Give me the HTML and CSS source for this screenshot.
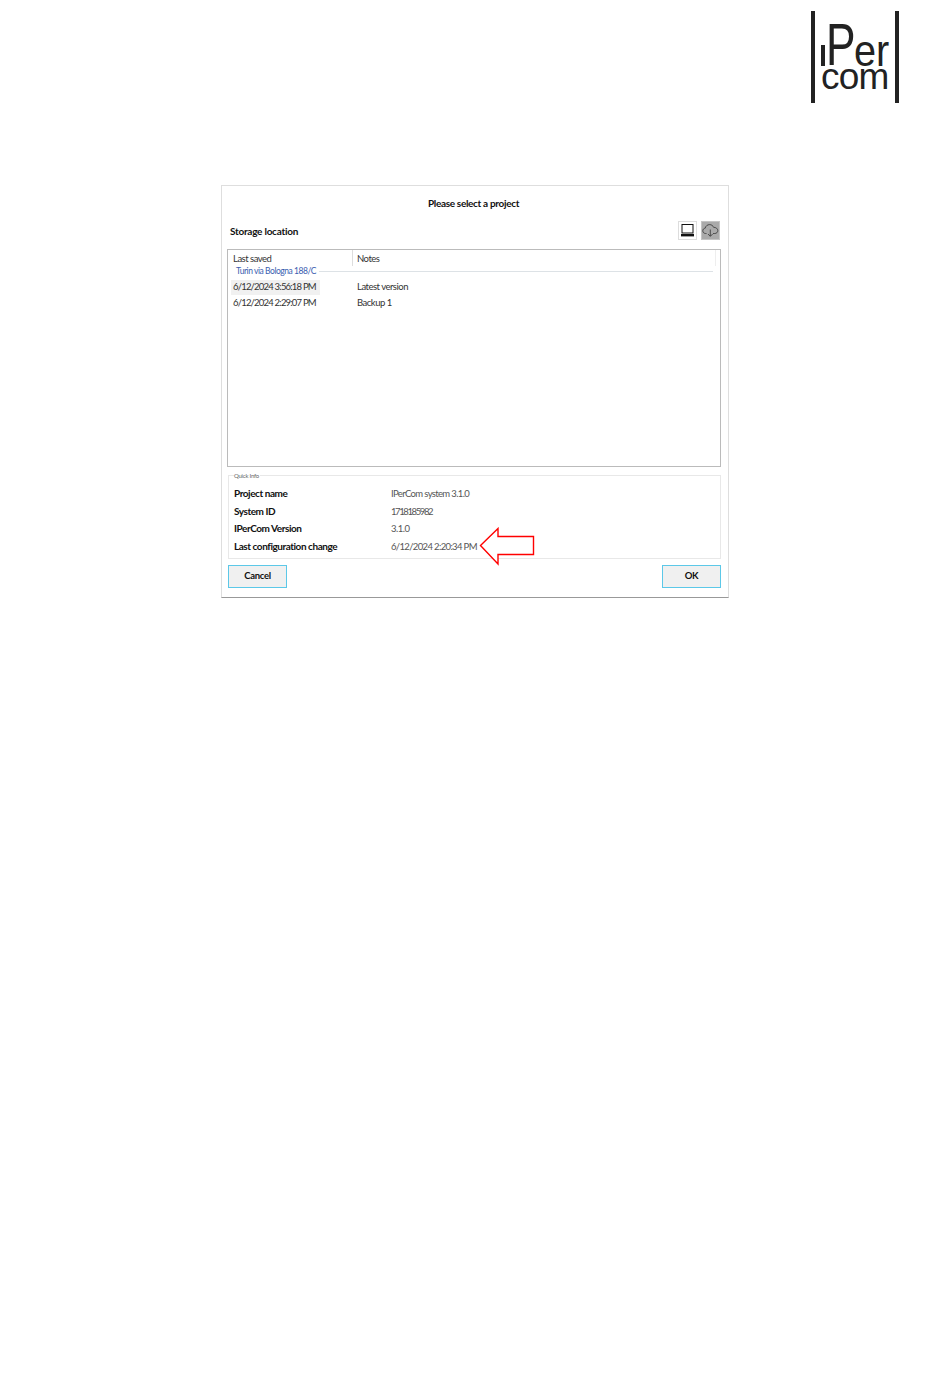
FILE: index.html
```html
<!DOCTYPE html>
<html lang="en">
<head>
<meta charset="utf-8">
<title>Please select a project</title>
<link rel="stylesheet" href="styles.css">
</head>
<body>
<header class="page-head">
  <div class="logo">
    <div class="logo-top"><span class="logo-i"></span><span class="logo-p">P</span><span class="logo-er">er</span></div>
    <div class="logo-com">com</div>
  </div>
</header>
<main class="dialog">
  <h1 class="title">Please select a project</h1>
  <div class="storage">
    <span class="storage-label">Storage location</span>
    <div class="storage-buttons">
      <button class="icon-btn">
        <svg width="15" height="15" viewBox="0 0 15 15"><rect x="2" y="1.5" width="11" height="8.5" fill="none" stroke="#111" stroke-width="1"/><rect x="1" y="11" width="13" height="2.4" fill="#111"/></svg>
      </button>
      <button class="icon-btn active">
        <svg width="17" height="15" viewBox="0 0 17 15"><path d="M4.5 10.5H3.6C1.9 10.5 .8 9.2 .8 7.8 .8 6.4 1.8 5.3 3.2 5.2 3.6 3 5.5 1.6 7.6 1.6 9.5 1.6 11 2.7 11.6 4.3 13.8 4.2 15.8 5.7 15.8 7.6 15.8 9.3 14.4 10.5 12.8 10.5H11M8.3 6.5V13M6 11 8.3 13.4 10.6 11" fill="none" stroke="#333" stroke-width=".8"/></svg>
      </button>
    </div>
  </div>
  <section class="list">
    <div class="list-head">
      <div class="col-date head-date">Last saved</div>
      <div class="col-notes head-notes">Notes</div>
    </div>
    <div class="group"><span class="group-name">Turin via Bologna 188/C</span><span class="group-line"></span></div>
    <div class="row selected"><div class="col-date"><span class="date-cell">6/12/2024 3:56:18 PM</span></div><div class="col-notes">Latest version</div></div>
    <div class="row"><div class="col-date"><span class="date-cell">6/12/2024 2:29:07 PM</span></div><div class="col-notes">Backup 1</div></div>
  </section>
  <fieldset class="info">
    <legend class="info-legend">Quick Info</legend>
    <div class="info-row"><span class="info-key">Project name</span><span class="info-val">IPerCom system 3.1.0</span></div>
    <div class="info-row"><span class="info-key">System ID</span><span class="info-val info-id">1718185982</span></div>
    <div class="info-row"><span class="info-key">IPerCom Version</span><span class="info-val info-ver">3.1.0</span></div>
    <div class="info-row"><span class="info-key">Last configuration change</span><span class="info-val info-date">6/12/2024 2:20:34 PM</span></div>
    <svg class="arrow" width="56" height="40" viewBox="0 0 56 40"><path d="M1.5 18.5 19 1.5V9.5H54.5V27.5H19V37Z" fill="#fff" stroke="#f00" stroke-width="1.4"/></svg>
  </fieldset>
  <div class="actions">
    <button class="btn">Cancel</button>
    <button class="btn">OK</button>
  </div>
</main>
</body>
</html>
```

FILE: styles.css
```css
* { box-sizing: border-box; }
html, body { margin: 0; padding: 0; background: #fff; }
body {
  width: 950px;
  height: 1397px;
  font-family: "Lato", "Roboto", sans-serif;
  font-size: 9.5px;
  letter-spacing: -.5px;
  color: #333;
  overflow: hidden;
}
.page-head {
  height: 185px;
  padding: 11px 51px 0 0;
  display: flex;
  justify-content: flex-end;
  align-items: flex-start;
}
.logo {
  width: 88px;
  height: 92px;
  border-left: 4px solid #222;
  border-right: 4px solid #222;
  font-family: "Liberation Sans", sans-serif;
  letter-spacing: 0;
  color: #222;
  padding-left: 6px;
}
.logo-top {
  display: flex;
  align-items: flex-end;
  height: 55px;
}
.logo-i {
  width: 4px;
  height: 21px;
  background: #222;
  margin-right: 1px;
}
.logo-p {
  display: block;
  width: 28px;
  font-size: 59px;
  line-height: 69px;
  height: 55px;
  transform: scaleX(.75);
  transform-origin: left bottom;
}
.logo-er {
  display: block;
  width: 34px;
  font-size: 44px;
  line-height: 79px;
  height: 55px;
  transform: scaleX(.9);
  transform-origin: left bottom;
}
.logo-com {
  font-size: 37px;
  line-height: 22px;
  letter-spacing: -.8px;
  height: 30px;
}
.dialog {
  width: 508px;
  height: 413px;
  margin-left: 221px;
  border: 1px solid #dedede;
  border-bottom-color: #999;
  padding: 0 8px 0 5px;
  position: relative;
}
.title {
  margin: 0;
  padding-top: 10px;
  height: 35px;
  text-align: center;
  font-size: 10px;
  line-height: 14px;
  font-weight: 700;
  letter-spacing: -.33px;
  color: #111;
}
.storage {
  display: flex;
  justify-content: space-between;
  align-items: center;
  height: 20px;
  padding-left: 3px;
}
.storage-label { font-weight: 700; color: #111; font-size: 10px; letter-spacing: -.25px; }
.storage-buttons { display: flex; gap: 4px; align-self: flex-start; }
.icon-btn {
  width: 19px;
  height: 19px;
  padding: 0;
  border: 1px solid #ddd;
  background: #fff;
  display: flex;
  align-items: center;
  justify-content: center;
}
.icon-btn.active { background: #aaa; border-color: #c4c4c4; }
.list {
  width: 494px;
  height: 218px;
  margin-top: 8px;
  border: 1px solid #bbb;
}
.list-head { display: flex; height: 16px; line-height: 17px; margin-right: 4px; }
.col-date { width: 125px; flex: none; }
.col-notes { flex: 1; }
.head-date { padding-left: 5px; border-right: 1px solid #ddd; }
.head-notes { padding-left: 4px; border-right: 1px solid #eee; }
.group {
  display: flex;
  align-items: center;
  height: 10px;
  padding: 0 7px 0 8px;
  margin-bottom: 4px;
  gap: 3px;
}
.group-name { color: #3a5db0; font-size: 8.5px; letter-spacing: -.45px; white-space: nowrap; }
.group-line { flex: 1; height: 1px; background: #dde2e6; }
.row { display: flex; height: 16px; line-height: 14px; }
.row .col-date { padding-left: 3px; width: 129px; }
.date-cell { display: inline-block; padding-left: 2px; padding-bottom: 1px; width: 89px; white-space: nowrap; letter-spacing: -.8px; }
.selected .date-cell { background: #f1f1f1; }
.info {
  position: relative;
  width: 493px;
  height: 87px;
  margin: 5px 0 0 1px;
  padding: 6px 5px 0;
  border: 1px solid #e8e8e8;
  min-width: 0;
}
.info-legend { font-size: 6px; line-height: 7px; padding: 0 1px 0 0; letter-spacing: -.25px; color: #666; }
.info-row { display: flex; height: 17.5px; line-height: 17px; }
.info-key { width: 157px; font-size: 10px; letter-spacing: -.45px; font-weight: 700; color: #111; }
.info-val { color: #555; letter-spacing: -.65px; }
.info-id { letter-spacing: -1.4px; }
.info-ver { letter-spacing: -.5px; }
.info-date { letter-spacing: -.65px; }
.arrow { position: absolute; left: 250px; top: 48px; }
.actions { display: flex; justify-content: space-between; width: 493px; margin: 6px 0 0 1px; }
.btn {
  width: 59px;
  height: 23px;
  padding: 0 0 2px;
  background: #f0f0f0;
  border: 1px solid #5cc8e8;
  font: 700 9.5px "Lato", "Roboto", sans-serif;
  letter-spacing: -.3px;
  color: #111;
}
```
